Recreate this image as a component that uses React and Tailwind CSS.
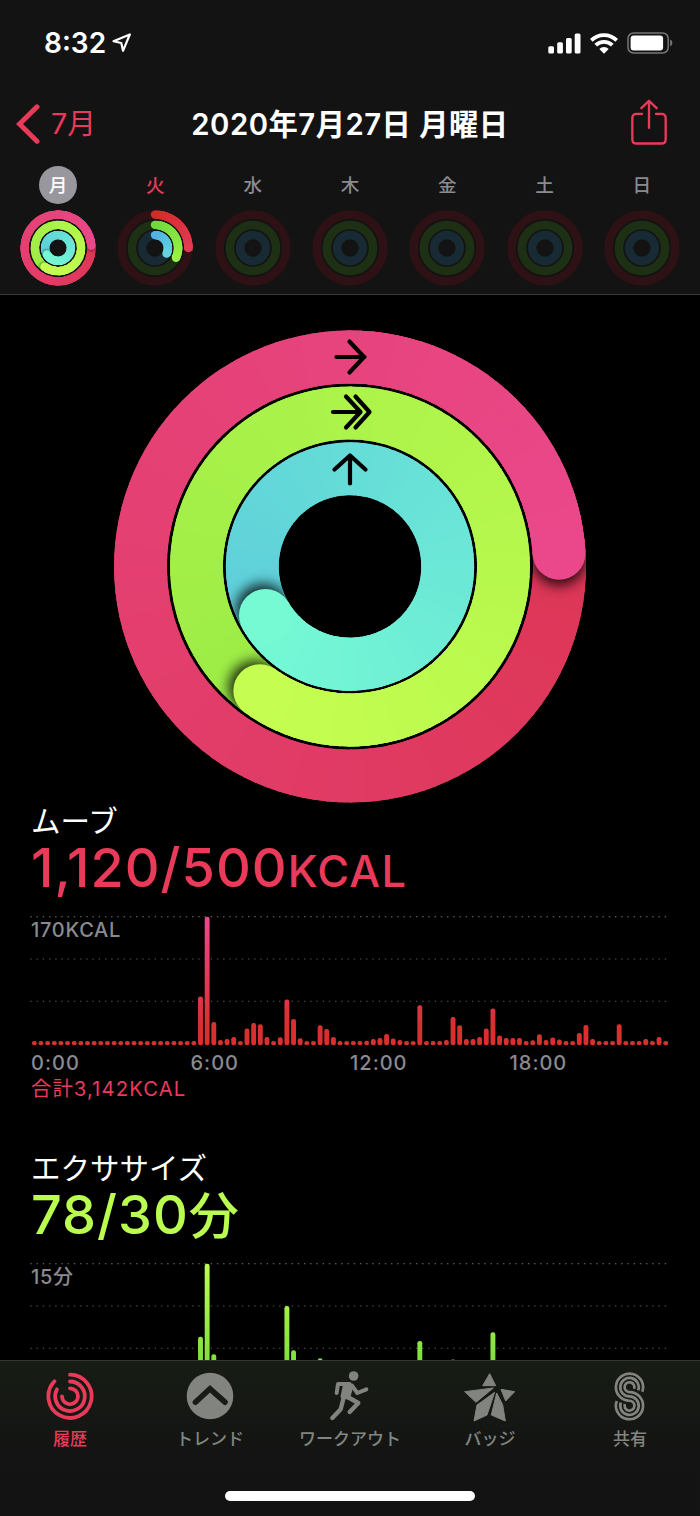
import React from 'react';

const WEEK = ['月', '火', '水', '木', '金', '土', '日'];

const MOVE_BARS = [
  ...Array(25).fill(4.3),
  48.7, 128.6, 23.3, 5.3, 6.3, 8.3, 4.3, 16.7, 22.3, 21, 8.3, 4.3, 8, 45.7, 26.3, 7, 4.3, 4.3,
  20, 16.3, 8.3, 4.3, 4.3, 4.3, 4.3, 4.6, 6.3, 7.3, 11.3, 6.7, 5.3, 4.3, 4.3, 40, 4.3, 4.3, 4.3,
  5.3, 28.3, 20, 6.3, 6.3, 8.3, 16.7, 36.7, 9.7, 7.3, 7.3, 7.2, 4.3, 5, 11, 5.3, 7.7, 5.7, 4.3,
  4.3, 12.3, 20.3, 6.3, 4.3, 4.3, 4.3, 21, 4.3, 4.3, 4.3, 6.3, 4.3, 8.3, 4.3,
];

const EXERCISE_PEAKS = { 25: 55.6, 26: 128.6, 27: 38, 38: 86.3, 39: 42, 43: 34, 58: 51.3, 63: 32.8, 69: 60 };
const EXERCISE_BARS = Array.from({ length: 96 }, (_, i) => EXERCISE_PEAKS[i] || 4.3);

const DONE = [
  { end: 446.4, from: [221, 54, 86], to: [234, 72, 138] },
  { end: 576, from: [156, 236, 70], to: [197, 254, 80] },
  { end: 600, from: [94, 206, 218], to: [117, 250, 212] },
];

const PARTIAL = [
  { end: 90, from: [210, 44, 40], to: [228, 58, 84] },
  { end: 115, from: [112, 218, 60], to: [156, 240, 72] },
  { end: 116, from: [82, 178, 226], to: [98, 214, 220] },
];

const TRACKS = ['#2e1114', '#1e3013', '#182a33'];

const point = (c, r, deg) => {
  const a = (deg * Math.PI) / 180;
  return [c + r * Math.sin(a), c - r * Math.cos(a)];
};

const arc = (c, r, a, b) => {
  const [x1, y1] = point(c, r, a);
  const [x2, y2] = point(c, r, b);
  return `M${x1} ${y1}A${r} ${r} 0 ${b - a > 180 ? 1 : 0} 1 ${x2} ${y2}`;
};

const mix = (from, to, t) => `rgb(${from.map((v, i) => Math.round(v + (to[i] - v) * t)).join(',')})`;

const Ring = ({ id, c, r, width, ring }) => {
  const over = ring.end > 360;
  const start = over ? ring.end - 360 : 0;
  const span = ring.end - start;
  const steps = width > 20 ? 120 : 24;
  const step = span / steps;
  const overlap = width > 20 ? 0.6 : 8;
  const [ex, ey] = point(c, r, ring.end);
  const [sx, sy] = point(c, r, ring.end + (width / r) * 6);

  const segments = (first) =>
    Array.from({ length: steps - first }, (_, k) => {
      const i = k + first;
      const a = start + i * step;
      const last = i === steps - 1;
      return (
        <path
          key={i}
          d={arc(c, r, a, a + step + (last ? 0 : overlap))}
          stroke={mix(ring.from, ring.to, i / (steps - 1))}
          strokeWidth={width}
          fill="none"
        />
      );
    });

  return (
    <g>
      {over && <circle cx={c} cy={c} r={r} fill="none" stroke={mix(ring.from, ring.to, 0.5)} strokeWidth={width - 0.4} />}
      {!over && <circle cx={c} cy={c - r} r={width / 2} fill={mix(ring.from, ring.to, 0)} />}
      {segments(0)}
      {over && (
        <g mask={`url(#${id}-mask)`}>
          <mask id={`${id}-mask`} maskUnits="userSpaceOnUse" x="0" y="0" width={c * 2} height={c * 2}>
            <circle cx={c} cy={c} r={r} fill="none" stroke="#fff" strokeWidth={width} />
          </mask>
          <filter id={`${id}-blur`} x="-50%" y="-50%" width="200%" height="200%">
            <feGaussianBlur stdDeviation={width * 0.12} />
          </filter>
          <circle cx={sx} cy={sy} r={width / 2} fill="#000" opacity={width > 20 ? 0.85 : 0.45} filter={`url(#${id}-blur)`} />
        </g>
      )}
      {over && segments(Math.round(steps * 0.75))}
      <circle cx={ex} cy={ey} r={width / 2} fill={mix(ring.from, ring.to, 1)} />
    </g>
  );
};

const MiniRings = ({ id, rings }) => (
  <svg width="76" height="76" viewBox="0 0 76 76">
    {[33.4, 23.1, 12.9].map((r, i) => (
      <g key={r}>
        {(!rings || rings[i].end < 360) && (
          <circle cx="38" cy="38" r={r} fill="none" stroke={TRACKS[i]} strokeWidth="8.5" />
        )}
        {rings && <Ring id={`${id}-${i}`} c={38} r={r} width={8.4} ring={rings[i]} />}
      </g>
    ))}
  </svg>
);

const BigRings = () => (
  <svg width="472" height="473" viewBox="0 -0.5 472 473" className="shrink-0">
    {[209.5, 153.5, 97.7].map((r, i) => (
      <Ring key={r} id={`big-${i}`} c={236} r={r} width={52.9} ring={DONE[i]} />
    ))}
    <g fill="none" stroke="#000" strokeWidth="4.2" strokeLinecap="round" strokeLinejoin="round">
      <path d="M222.5 26.5H250.500M235.5 11l14.500 15.5L235.5 42" />
      <path d="M219 81.5H245M232 66l14.500 15.5-14.500 15.5M241.5 66l14 15.5-14 15.500" />
      <path d="M236 153v-28M220.500 139L236 125l15.500 14" />
    </g>
  </svg>
);

const StatusBar = () => (
  <div className="flex h-[86px] items-center justify-between pl-[44px] pr-[27px] text-white">
    <div className="flex items-center gap-[6px]">
      <span className="text-[28px] font-semibold leading-none">8:32</span>
      <svg width="20" height="20" viewBox="0 0 20 20">
        <path d="M1.500 8.300L17.800 1.500 11 17.800 9.300 10z" fill="none" stroke="#fff" strokeWidth="2.200" strokeLinejoin="round" />
      </svg>
    </div>
    <div className="flex items-center gap-[9px]">
      <svg width="33" height="21" viewBox="0 0 33 21" fill="#fff">
        <rect x="0.3" y="13.200" width="5.700" height="7.300" rx="1.500" />
        <rect x="9.200" y="9.200" width="5.700" height="11.300" rx="1.500" />
        <rect x="18" y="4.900" width="5.700" height="15.600" rx="1.500" />
        <rect x="26.700" y="0.600" width="5.800" height="19.900" rx="1.500" />
      </svg>
      <svg width="28" height="21" viewBox="0 0 28 21">
        <path d="M1.300 7.400a18 18 0 0 1 25.400 0" fill="none" stroke="#fff" strokeWidth="3.800" />
        <path d="M5.700 12.200a11.800 11.800 0 0 1 16.600 0" fill="none" stroke="#fff" strokeWidth="3.800" />
        <path d="M9.300 16a6.700 6.700 0 0 1 9.400 0L14 20.800z" fill="#fff" />
      </svg>
      <svg width="46" height="22" viewBox="0 0 46 22">
        <rect x="1" y="1" width="40.200" height="20" rx="5.500" fill="none" stroke="#77777a" strokeWidth="1.500" />
        <rect x="3.600" y="3.600" width="32.500" height="14.800" rx="3" fill="#fff" />
        <path d="M43.200 7.600q2.200 1 2.200 3.400t-2.200 3.400z" fill="#77777a" />
      </svg>
    </div>
  </div>
);

const TitleRow = () => (
  <div className="grid h-[76px] grid-cols-[140px_1fr_140px] items-center text-[28.7px] leading-none">
    <div className="flex items-center gap-[11px] pl-[16px] text-[#ea3a5a]">
      <svg width="24" height="40" viewBox="0 0 24 40">
        <path d="M21 2.800L3.500 20 21 37.200" fill="none" stroke="currentColor" strokeWidth="5" strokeLinecap="round" />
      </svg>
      <span className="mt-px">7月</span>
    </div>
    <h1 className="mt-px whitespace-nowrap text-center text-[29.300px] font-semibold tracking-[0.500px] text-white">
      2020年7月27日 月曜日
    </h1>
    <div className="flex justify-end pb-[3px] pr-[31px]">
      <svg width="40" height="49" viewBox="836 294 120 146" fill="none" stroke="#ea3a5a" strokeWidth="7" strokeLinecap="round" strokeLinejoin="round">
        <path d="M875 341H859q-13 0-13 13v63q0 13 13 13h74q13 0 13-13v-63q0-13-13-13H917" />
        <path d="M896 383V303M873 324l23-22 23 22" />
      </svg>
    </div>
  </div>
);

const dayColor = (i) => {
  if (i === 0) return 'bg-[#98979e] text-white';
  if (i === 1) return 'text-[#ea3a5a]';
  return 'text-[#8a8a90]';
};

const WeekRow = () => (
  <div className="grid grid-cols-7 px-[9.500px] pt-[4px]">
    {WEEK.map((day, i) => (
      <div key={day} className="flex flex-col items-center gap-[6px]">
        <span className={`flex h-[38px] w-[38px] items-center justify-center rounded-full text-[18.600px] font-medium leading-none ${dayColor(i)}`}>
          {day}
        </span>
        <MiniRings id={`day-${i}`} rings={[DONE, PARTIAL][i]} />
      </div>
    ))}
  </div>
);

const Chart = ({ id, bars, top, bottom }) => (
  <svg width="638" height="130" viewBox="0 0 638 130" className="block">
    <defs>
      <linearGradient id={id} gradientUnits="userSpaceOnUse" x1="0" y1="0" x2="0" y2="129">
        <stop offset="0" stopColor={top} />
        <stop offset="0.85" stopColor={bottom} />
      </linearGradient>
    </defs>
    {[0.7, 43, 85.300].map((y, i) => (
      <line key={y} x1="0.3" x2="637" y1={y} y2={y} stroke={i === 0 ? '#77777a' : '#58585b'} strokeWidth="1.100" strokeDasharray="1.400 4.820" />
    ))}
    {bars.map((h, i) => (
      <rect key={i} x={1.900 + i * 6.646} y={129.300 - h} width="4.900" height={h} rx="2.200" fill={`url(#${id})`} />
    ))}
  </svg>
);

const Section = ({ label, value, unit, unitClass, color, max, chart, total }) => (
  <section className="h-[347px] pl-[31px]">
    <h2 className="h-[37px] text-[29.500px] font-normal leading-[37px] text-white">{label}</h2>
    <div className={`flex h-[56px] items-baseline whitespace-nowrap leading-[56px] ${color}`}>
      <span className="text-[54px] font-medium tracking-[1px]">{value}</span>
      <span className={unitClass}>{unit}</span>
    </div>
    <div className="relative -ml-px mt-[20px]">
      {chart}
      <span className="absolute left-px top-[4px] text-[20px] font-medium leading-[20px] tracking-[0.700px] text-[#8a8a90]">{max}</span>
    </div>
    {total && (
      <>
        <div className="mt-[7px] grid w-[638px] grid-cols-4 text-[20px] font-medium leading-[20px] tracking-[1px] text-[#8a8a90]">
          <span>0:00</span>
          <span>6:00</span>
          <span>12:00</span>
          <span>18:00</span>
        </div>
        <div className="mt-[5px] text-[20.300px] leading-[22px] tracking-[1.100px] text-[#ea3a5a]">{total}</div>
      </>
    )}
  </section>
);

const HistoryIcon = () => (
  <svg width="50" height="60" viewBox="0 0 50 60" fill="none" stroke="currentColor" strokeWidth="3.800" strokeLinecap="round">
    <g transform="translate(0 6.300)">
      <path d={arc(25, 21.600, 0, 314)} />
      <path d={arc(25, 14.800, 0, 298)} />
      <path d={arc(25, 8, 0, 270)} />
    </g>
  </svg>
);

const TrendIcon = () => (
  <svg width="50" height="60" viewBox="0 0 50 60">
    <circle cx="25" cy="31" r="23.300" fill="currentColor" />
    <path d="M10.400 37.200L25 23.800l15 13.400" fill="none" stroke="#181c16" strokeWidth="5.600" strokeLinecap="round" />
  </svg>
);

const WorkoutIcon = () => (
  <svg width="50" height="60" viewBox="0 0 150 180" fill="none" stroke="currentColor" strokeLinecap="round" strokeLinejoin="round">
    <circle cx="86" cy="33" r="14.500" fill="currentColor" stroke="none" />
    <path d="M35 84l4-27h35" strokeWidth="12" />
    <path d="M81 62l16 22 27-11" strokeWidth="12" />
    <path d="M60 57l20 5-10 36-18-3z" fill="currentColor" strokeWidth="11" />
    <path d="M68 96l32 18-26 27" strokeWidth="13" />
    <path d="M57 94l-10 39-25 26" strokeWidth="13" />
  </svg>
);

const BadgeIcon = () => (
  <svg width="60" height="60" viewBox="0 0 180 180" fill="currentColor" stroke="currentColor" strokeWidth="3" strokeLinejoin="round">
    <path d="M89 26l18 36H68z" />
    <path d="M14 80l86-11-52 43z" />
    <path d="M123 73l41 7-27 28z" />
    <path d="M51 120l53-38-23 68-39 18z" />
    <path d="M110 84l18 35 8 49-42-18z" />
  </svg>
);

const SharingIcon = () => {
  // three parallel strands, each running from one bowl's radius into the other's
  const strands = [[40.75, 14.75], [27.75, 27.75], [14.75, 40.75]];
  const dx = Math.cos(0.35);
  const dy = Math.sin(0.35);
  return (
    <svg width="50" height="60" viewBox="0 0 150 180" fill="none" stroke="currentColor" strokeWidth="8" strokeLinecap="butt">
      {strands.map(([a, b]) => (
        <path
          key={a}
          d={`M${73.5 + a * dx} ${66.5 + a * dy}A${a} ${a} 0 1 0 73.500 ${66.5 + a}A${b} ${b} 0 1 1 ${73.5 - b * dx} ${122 - b * dy}`}
        />
      ))}
    </svg>
  );
};

const TABS = [
  { label: '履歴', Icon: HistoryIcon },
  { label: 'トレンド', Icon: TrendIcon },
  { label: 'ワークアウト', Icon: WorkoutIcon },
  { label: 'バッジ', Icon: BadgeIcon },
  { label: '共有', Icon: SharingIcon },
];

const TabBar = () => (
  <nav className="flex h-[156px] shrink-0 flex-col items-center border-t border-[#343634] bg-linear-to-b from-[#171c14] to-[#131313] to-70%">
    <div className="grid w-full grid-cols-5 pt-[4px]">
      {TABS.map(({ label, Icon }, i) => (
        <div key={label} className={`flex flex-col items-center ${i === 0 ? 'text-[#ea3a5a]' : 'text-[#82857f]'}`}>
          <Icon />
          <span className="mt-[4px] whitespace-nowrap text-[17px] font-medium leading-[20px]">{label}</span>
        </div>
      ))}
    </div>
    <div className="mt-[42px] h-[10px] w-[250px] rounded-full bg-white" />
  </nav>
);

const App = () => {
  return (
    <div className="flex h-[1516px] w-[700px] flex-col overflow-hidden bg-black font-[Inter,'Noto_Sans_CJK_JP',sans-serif]">
      <header className="h-[295px] shrink-0 border-b border-[#3a3a3a] bg-[#131313]">
        <StatusBar />
        <TitleRow />
        <WeekRow />
      </header>
      <main className="min-h-0 flex-1 overflow-hidden">
        <div className="flex h-[508px] justify-center pt-[35px]">
          <BigRings />
        </div>
        <Section
          label="ムーブ"
          value="1,120/500"
          unit="KCAL"
          unitClass="text-[43.500px] font-medium tracking-[1.200px]"
          color="text-[#ea3a5a]"
          max="170KCAL"
          total="合計3,142KCAL"
          chart={<Chart id="move-bars" bars={MOVE_BARS} top="#ec4890" bottom="#d8302f" />}
        />
        <Section
          label="エクササイズ"
          value="78/30"
          unit="分"
          unitClass="text-[50px] font-medium"
          color="text-[#bafc4f]"
          max="15分"
          chart={<Chart id="exercise-bars" bars={EXERCISE_BARS} top="#c0fb50" bottom="#78dc3c" />}
        />
      </main>
      <TabBar />
    </div>
  );
};

export default App;
